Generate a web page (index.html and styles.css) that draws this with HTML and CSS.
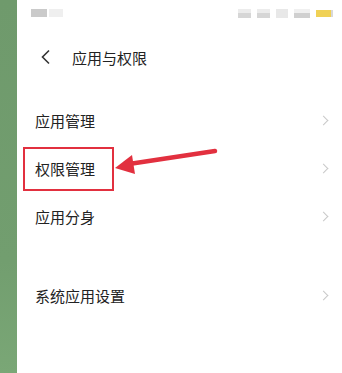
FILE: index.html
```html
<!DOCTYPE html>
<html lang="zh">
<head>
<meta charset="utf-8">
<link rel="stylesheet" href="styles.css">
</head>
<body>
<div class="strip"></div>
<div class="screen">
  <div class="status">
    <div class="status-left"><span class="blot b1"></span><span class="blot b2"></span></div>
    <div class="status-right">
      <span class="sig"></span><span class="sig"></span><span class="sig s3"></span><span class="sig s4"></span>
      <span class="battery"></span>
    </div>
  </div>
  <div class="header">
    <svg class="back" width="12" height="16" viewBox="0 0 12 16"><path d="M9 1.5 L2.5 8 L9 14.5" fill="none" stroke="#333" stroke-width="1.6"/></svg>
    <span class="title">应用与权限</span>
  </div>
  <div class="list">
    <div class="row"><span class="label">应用管理</span><span class="chev"></span></div>
    <div class="row highlighted">
      <span class="label">权限管理</span><span class="chev"></span>
      <div class="redbox"></div>
      <svg class="arrow" width="104" height="30" viewBox="0 0 104 30">
        <path d="M14 17 L100 4" stroke="#e2303f" stroke-width="4.5" stroke-linecap="round" fill="none"/>
        <path d="M0 21 L17 8 L20 27 Z" fill="#e2303f"/>
      </svg>
    </div>
    <div class="row"><span class="label">应用分身</span><span class="chev"></span></div>
    <div class="row sep"><span class="label">系统应用设置</span><span class="chev"></span></div>
  </div>
</div>
</body>
</html>
```
FILE: styles.css
```css
html, body { margin: 0; padding: 0; }
body {
  display: flex;
  width: 342px;
  height: 373px;
  overflow: hidden;
  background: #fff;
  font-family: "Noto Sans CJK SC", "Noto Sans", sans-serif;
  color: #222;
}
.strip {
  width: 17px;
  flex: none;
  background: linear-gradient(180deg, #6f9a6c 0%, #729e6f 70%, #7aa776 100%);
}
.screen {
  flex: 1;
  display: flex;
  flex-direction: column;
}
.status {
  height: 36px;
  display: flex;
  justify-content: space-between;
  align-items: flex-start;
  padding: 9px 9px 0 14px;
  box-sizing: border-box;
}
.status-left { display: flex; gap: 2px; }
.blot { display: block; height: 8px; background: #cfcfcf; }
.b1 { width: 16px; background: #cacaca; }
.b2 { width: 14px; background: #efefef; }
.status-right { display: flex; gap: 6px; align-items: center; }
.sig { display: block; width: 13px; height: 9px; background: linear-gradient(180deg, #ececec 0 45%, #d6d6d6 45% 100%); }
.s3 { width: 12px; background: #e8e8e8; }
.s4 { width: 16px; background: linear-gradient(180deg, #f0f0f0 0 50%, #d0d0d0 50% 100%); }
.battery { display: block; width: 15px; height: 7px; background: #f0d155; border-right: 2px solid #d8d8d8; }
.header {
  height: 42px;
  display: flex;
  align-items: center;
  padding-left: 23px;
}
.back { display: block; margin-right: 20px; }
.title { font-size: 15px; line-height: 1; }
.list {
  padding-top: 18px;
  display: flex;
  flex-direction: column;
}
.row {
  position: relative;
  height: 48px;
  display: flex;
  align-items: center;
  justify-content: space-between;
  padding: 0 15px 0 18px;
}
.label { font-size: 15px; line-height: 1; }
.chev {
  width: 6px;
  height: 6px;
  border-top: 1.3px solid #c9c9c9;
  border-right: 1.3px solid #c9c9c9;
  transform: rotate(45deg);
}
.sep { margin-top: 31px; }
.redbox {
  position: absolute;
  left: 6px;
  top: 3px;
  width: 87px;
  height: 40px;
  border: 2.5px solid #e2303f;
}
.arrow {
  position: absolute;
  left: 98px;
  top: 3px;
}
```
